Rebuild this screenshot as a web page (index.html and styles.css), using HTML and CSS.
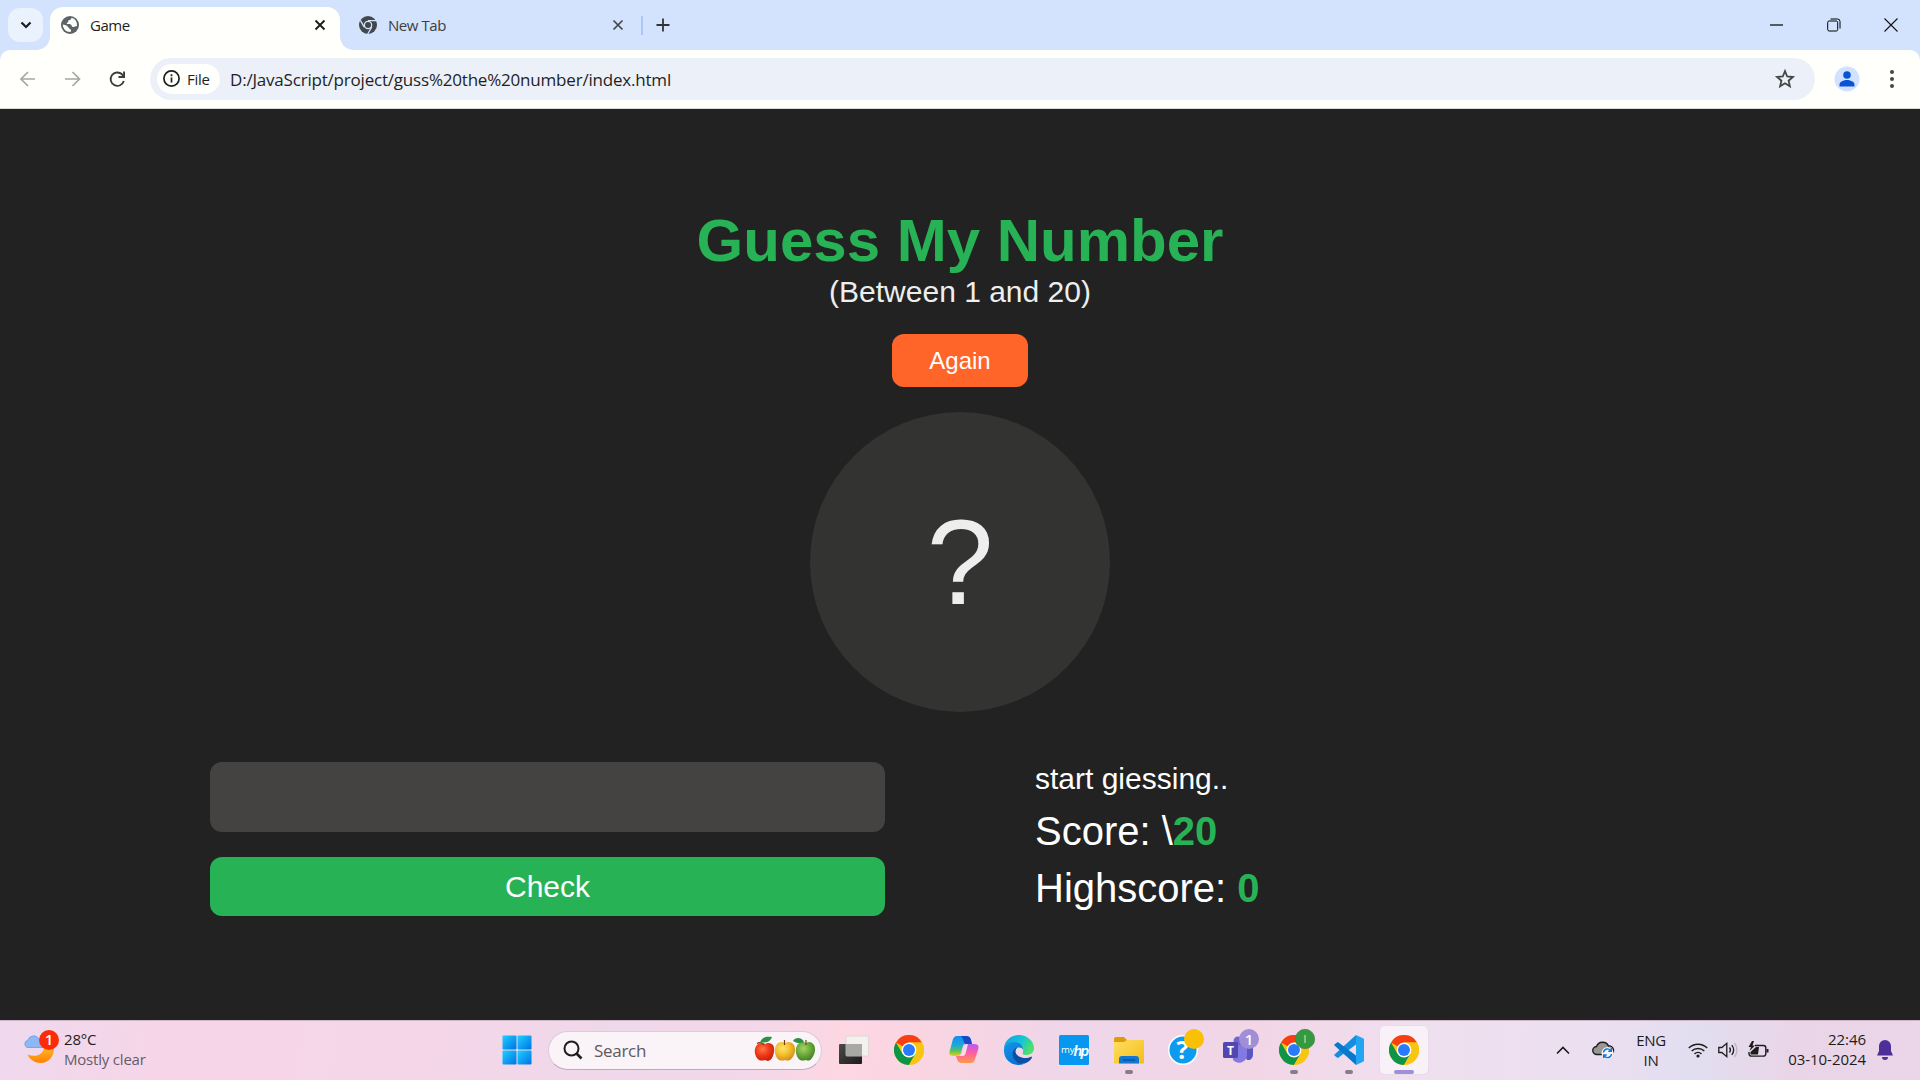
FILE: index.html
```html
<!DOCTYPE html>
<html lang="en">
<head>
<meta charset="utf-8">
<title>Game</title>
<link rel="stylesheet" href="styles.css">
</head>
<body>
<svg width="0" height="0" class="defs">
  <defs>
    <linearGradient id="win" x1="0" y1="0" x2="1" y2="1"><stop offset="0" stop-color="#1ed0ff"/><stop offset="1" stop-color="#0072e5"/></linearGradient>
    <linearGradient id="edgeA" x1="0" y1="0" x2="1" y2=".4"><stop offset="0" stop-color="#0aa0e0"/><stop offset=".6" stop-color="#14c4d8"/><stop offset="1" stop-color="#4be06a"/></linearGradient>
    <linearGradient id="edgeB" x1="0" y1="0" x2=".6" y2="1"><stop offset="0" stop-color="#1496e8"/><stop offset="1" stop-color="#0b6fd2"/></linearGradient>
    <linearGradient id="folder" x1="0" y1="0" x2="1" y2="1"><stop offset="0" stop-color="#ffdf63"/><stop offset="1" stop-color="#f5bc16"/></linearGradient>
    <linearGradient id="copA" x1="0" y1="0" x2="0" y2="1"><stop offset="0" stop-color="#128df0"/><stop offset=".45" stop-color="#1ba8dd"/><stop offset=".75" stop-color="#5cc25a"/><stop offset="1" stop-color="#f4cf12"/></linearGradient>
    <linearGradient id="copB" x1="0" y1="0" x2="0" y2="1"><stop offset="0" stop-color="#b45cf5"/><stop offset=".45" stop-color="#ff5aa5"/><stop offset="1" stop-color="#ff9a4a"/></linearGradient>
    <linearGradient id="moon" x1="0" y1="0" x2="0" y2="1"><stop offset="0" stop-color="#ffb52a"/><stop offset="1" stop-color="#ff8200"/></linearGradient>
    <radialGradient id="red" cx=".4" cy=".35" r=".7"><stop offset="0" stop-color="#ff7a4a"/><stop offset=".5" stop-color="#f23a17"/><stop offset="1" stop-color="#c31e0a"/></radialGradient>
    <radialGradient id="yel" cx=".4" cy=".35" r=".7"><stop offset="0" stop-color="#ffe36a"/><stop offset=".5" stop-color="#f3bf2e"/><stop offset="1" stop-color="#d08a1a"/></radialGradient>
    <radialGradient id="grn" cx=".4" cy=".35" r=".7"><stop offset="0" stop-color="#a6d463"/><stop offset=".5" stop-color="#6cac3c"/><stop offset="1" stop-color="#3f7d22"/></radialGradient>
    <linearGradient id="dark" x1="0" y1="0" x2="1" y2="1"><stop offset="0" stop-color="#4a4a48"/><stop offset="1" stop-color="#1b1b1b"/></linearGradient>
    <symbol id="chrome" viewBox="0 0 30 30">
      <circle cx="15" cy="15" r="15" fill="#f9c513"/>
      <path d="M15 15 2 7.500A15 15 0 0 1 28 7.500H15z" fill="#fa3e14"/>
      <path d="M2 7.500A15 15 0 0 0 15 30l6.500-11.200L8.500 18.800z" fill="#0d9447"/>
      <path d="M15 7.500h13A15 15 0 0 1 15 30l6.500-11.300z" fill="#f9c513"/>
      <circle cx="15" cy="15" r="7.400" fill="#fffffb"/>
      <circle cx="15" cy="15" r="6" fill="#2a7bfb"/>
    </symbol>
  </defs>
</svg>
<div class="screen">
  <header class="tabstrip">
    <div class="tabsearch"><svg width="12" height="12" viewBox="0 0 12 12"><path d="M1.500 3.500L6 8l4.500-4.500" fill="none" stroke="#1d1d1b" stroke-width="2.200"/></svg></div>
    <div class="tab active">
      <svg width="18" height="18" viewBox="0 0 18 18"><circle cx="9" cy="9" r="9" fill="#5e6368"/><path d="M10.500 1.800c-.2 1.500-1 2.200-2.700 2.400-.7.100-.3 1.800-1.200 2.200-1 .4-1.200 1.400-.3 1.600 1.800.2 4.300 0 4.400 1.900.1.900 1.300 1 2 1 .9 0 1.600-.9 3.300-.9a7.300 7.300 0 0 0-5.500-8.200zM1.800 8.500c1.400.5 4.500.6 5.100 2.400.3 1 1.600.6 1.600 1.900 0 .8 1.500.3 1.600 1.200.1.900-.5 1.500-.8 2.100A7.200 7.200 0 0 1 1.800 8.500z" fill="#fffffb"/></svg>
      <span class="tabname">Game</span>
      <svg width="12" height="12" viewBox="0 0 12 12"><path d="M1.500 1.500l9 9m0-9l-9 9" stroke="#1d1d1b" stroke-width="1.900"/></svg>
    </div>
    <div class="tab idle">
      <svg width="18" height="18" viewBox="0 0 18 18"><circle cx="9" cy="9" r="9" fill="#43474b"/><path d="M9 4.700h8M5.300 11.200L1.300 4.300M12.700 11.200L8.700 18" stroke="#d3e3fd" stroke-width="1.300"/><circle cx="9" cy="9" r="4.300" fill="#d3e3fd"/><circle cx="9" cy="9" r="3" fill="#43474b"/></svg>
      <span class="tabname">New Tab</span>
      <svg width="12" height="12" viewBox="0 0 12 12"><path d="M1.500 1.500l9 9m0-9l-9 9" stroke="#454746" stroke-width="1.700"/></svg>
    </div>
    <i class="divider"></i>
    <svg class="plus" width="14" height="14" viewBox="0 0 14 14"><path d="M7 .5v13M.5 7h13" stroke="#333" stroke-width="1.800"/></svg>
    <div class="winbtns">
      <svg width="14" height="14" viewBox="0 0 14 14"><path d="M1 7h13" stroke="#000" stroke-width="1.200"/></svg>
      <svg width="14" height="14" viewBox="0 0 14 14" fill="none" stroke="#000"><rect x=".7" y="3" width="10" height="10" rx="1.500"/><path d="M3.500 1h7a2.500 2.500 0 0 1 2.500 2.500v7"/></svg>
      <svg width="14" height="14" viewBox="0 0 14 14"><path d="M.5.500l13 13m0-13l-13 13" stroke="#111" stroke-width="1.100"/></svg>
    </div>
  </header>
  <div class="toolbar">
    <svg class="nav" width="18" height="18" viewBox="0 0 18 18" fill="none" stroke="#a7a7a5" stroke-width="1.700"><path d="M16 9H2.500M9 2L2 9l7 7"/></svg>
    <svg class="nav" width="18" height="18" viewBox="0 0 18 18" fill="none" stroke="#a7a7a5" stroke-width="1.700"><path d="M1 9h14M8.500 2l7 7-7 7"/></svg>
    <svg class="nav" width="18" height="18" viewBox="0 0 18 18"><path d="M15.800 11A6.700 6.700 0 1 1 14 4.300l1.500 1.700" fill="none" stroke="#3c3c3a" stroke-width="1.900"/><path d="M17 1.500V8h-6.500V6.100h4.600V1.500z" fill="#3c3c3a"/></svg>
    <div class="omnibox">
      <div class="chip"><svg width="17" height="17" viewBox="0 0 17 17"><circle cx="8.500" cy="8.500" r="7.600" fill="none" stroke="#1f1f1f" stroke-width="1.700"/><path d="M8.500 7.500v5M8.500 4.300v1.900" stroke="#1f1f1f" stroke-width="1.700"/></svg><span>File</span></div>
      <span class="url">D:/JavaScript/project/guss%20the%20number/index.html</span>
      <svg width="20" height="20" viewBox="0 0 20 20"><path d="M10 2.200l2.200 5.300 5.700.5-4.300 3.700 1.300 5.600-4.900-3-4.900 3 1.300-5.600L2.100 8l5.700-.5z" fill="none" stroke="#454746" stroke-width="1.800"/></svg>
    </div>
    <svg class="avatar" width="26" height="26" viewBox="0 0 26 26"><circle cx="13" cy="13" r="12.500" fill="#d0e2ff"/><circle cx="13" cy="9" r="3.800" fill="#0a53d6"/><path d="M5.500 20.500v-2c0-3 4.500-4.500 7.500-4.500s7.500 1.500 7.500 4.500v2z" fill="#0a53d6"/></svg>
    <svg class="dots" width="4" height="20" viewBox="0 0 4 20" fill="#454746"><circle cx="2" cy="3" r="2"/><circle cx="2" cy="10" r="2"/><circle cx="2" cy="17" r="2"/></svg>
  </div>

  <main class="game">
    <h1>Guess My Number</h1>
    <p class="between">(Between 1 and 20)</p>
    <button class="again">Again</button>
    <div class="number">?</div>
    <div class="columns">
      <section class="left">
        <input class="guess" type="text" aria-label="Guess">
        <button class="check">Check</button>
      </section>
      <section class="right">
        <p class="message">start giessing..</p>
        <p class="label">Score: \<b>20</b></p>
        <p class="label">Highscore: <b>0</b></p>
      </section>
    </div>
  </main>

  <footer class="taskbar">
    <div class="weather">
      <svg width="36" height="38" viewBox="0 0 36 38"><path d="M3 18.500a4 4 0 0 1 1-7.500 6 6 0 0 1 11-1l5 8.500z" fill="#8db8f6" stroke="#6c9de8" stroke-width=".8"/><path d="M3.500 25.500C12 29 20 25 20 18h9.500c1.500 9-5 16-12.500 16-6 0-11-3-13.500-8.500z" fill="url(#moon)"/><circle cx="25" cy="11" r="10" fill="#fc2b08"/><text x="25" y="16.300" class="badgetext">1</text></svg>
      <div class="lines"><span>28°C</span><span class="muted">Mostly clear</span></div>
    </div>
    <div class="dock">
      <svg class="start" width="30" height="30" viewBox="0 0 30 30" fill="url(#win)"><rect x=".5" y=".5" width="14" height="14" rx="1"/><rect x="15.500" y=".5" width="14" height="14" rx="1"/><rect x=".5" y="15.500" width="14" height="14" rx="1"/><rect x="15.500" y="15.500" width="14" height="14" rx="1"/></svg>
      <div class="search">
        <svg width="20" height="20" viewBox="0 0 20 20"><circle cx="8.500" cy="8.500" r="7" fill="none" stroke="#1e1e1e" stroke-width="2"/><path d="M13.500 13.500l5 5" stroke="#1e1e1e" stroke-width="2.600"/></svg>
        <span>Search</span>
        <svg class="apples" width="62" height="28" viewBox="0 0 62 28">
          <path d="M11 8c3-2 6-1 8 1 2 3 1 10-1 13-3 4-5 3-7 2-3 1-6 1-8-2-3-4-3-10 0-13 2-2 5-3 8-1z" fill="url(#red)"/><path d="M10 9C9 7 6 5.500 3 7.500" fill="none" stroke="#7a3a1a" stroke-width="1.200"/><path d="M6 6.500C8 1 12 .5 18 1c-2 5-6 6-12 5.500z" fill="#2f8f45"/>
          <path d="M31 7c3-2 7-1 9 2 2 4 1 10-2 13-2 3-5 3-7 2-3 1-6 1-8-2-3-5-3-10 0-14 2-2 5-3 8-1z" fill="url(#yel)"/><path d="M30.500 9V4" stroke="#7a3a1a" stroke-width="1.200"/>
          <path d="M52 7c3-2 6-1 8 2 2 4 1 9-2 13-2 3-4 3-6 2-3 1-6 1-8-2-3-5-3-10 0-14 2-2 5-3 8-1z" fill="url(#grn)"/><path d="M52 9V4" stroke="#5a4a1a" stroke-width="1.200"/><path d="M39 5c2-4 9-4 11 1-4 2-8 1-11-1z" fill="#2f8f45"/>
        </svg>
      </div>
      <div class="app"><svg width="30" height="30" viewBox="0 0 30 30"><rect y="9" width="23" height="20" rx="1" fill="url(#dark)"/><rect x="7" y="1" width="22.500" height="20" rx="1" fill="#f2f2ee" fill-opacity=".93" stroke="#d5d3d1" stroke-width=".8"/><path d="M7 9h16v12H7z" fill="#a8a8a6"/></svg></div>
      <div class="app"><svg width="30" height="30"><use href="#chrome"/></svg></div>
      <div class="app"><svg width="30" height="30" viewBox="0 0 30 30"><path d="M8 1h9c3 0 4 1 5 4l1 4h-6c-3 0-3 2-4 5l-1 4c-1 3-2 3-5 3H4c-4 0-4-3-3-6L4 4c1-2 2-3 4-3z" fill="url(#copA)"/><path d="M12 1h5c3 0 4 1 5 4l1 4h-5c-3 0-3-2-4-5z" fill="#1a49c6"/><path d="M22 28h-9c-3 0-4-1-5-4l-1-3c4 0 5-1 6-5l1-3c1-3 2-4 5-4h6c5 0 5 3 4 6l-3 9c-1 3-2 4-4 4z" fill="url(#copB)"/><path d="M7 21c4 0 5-1 6-5l1-3c1-3 2-4 5-4l-2 8c-1 3-1 4-4 4z" fill="#f7dcea"/></svg></div>
      <div class="app"><svg width="30" height="30" viewBox="0 0 30 30"><path d="M0 14C0 6 7 0 15 0s15 6 15 13c0 5-4 7-8 7-3 0-4-1-3-3 1-5-3-7-7-7C7 10 2 12 0 14z" fill="url(#edgeA)"/><path d="M0 14C2 8 8 6.500 13 7.500c5 1 6 5 6 8 0-3-7-5-8 1C10 22 14 28 20 29 8 33-1 24 0 14z" fill="url(#edgeB)"/><path d="M13 12.500c-5 2-6 8-2 12.500 3 4 8 5 12 2.500 2-1 4-3 5-5 .5-1-.5-1-1-.7-6 3-15 0-15.500-5 0-2 .5-3 1.500-4.300z" fill="#0b4fa5"/></svg></div>
      <div class="app"><svg width="30" height="30" viewBox="0 0 30 30"><rect width="30" height="30" rx="1.500" fill="#0797f0"/><text x="2" y="18" class="my">my</text><text x="14.500" y="20.500" class="hp">hp</text></svg></div>
      <div class="app dot"><svg width="30" height="30" viewBox="0 0 30 30"><path d="M0 4a2 2 0 0 1 2-2h8l3 3v5H0z" fill="#dd9d0a"/><path d="M0 7h10l3-2h17v22.500a1 1 0 0 1-1 1H0z" fill="url(#folder)"/><path d="M5 28.500V24a3 3 0 0 1 3-3h14a3 3 0 0 1 3 3v4.500z" fill="#0f78d4"/><path d="M9 25h12" stroke="#0a4d92" stroke-width="1.300"/></svg></div>
      <div class="app"><svg width="40" height="40" viewBox="0 0 40 40"><circle cx="19" cy="20" r="14.300" fill="#0c9bee" stroke="#fff" stroke-width="1.500"/><text x="18.500" y="28.500" class="q">?</text><circle cx="30" cy="9" r="10" fill="#f9c006"/></svg></div>
      <div class="app"><svg width="40" height="40" viewBox="0 0 40 40"><path d="M21 15h13v10a5 5 0 0 1-6 5z" fill="#5b55c0"/><path d="M13 13h15v12a8 8 0 0 1-14 5z" fill="#8379e2"/><circle cx="19" cy="11" r="4.500" fill="#6e68cd"/><rect x="4" y="12" width="15" height="16" rx="1.500" fill="#5048b0"/><text x="11.500" y="24.500" class="tee">T</text><circle cx="30" cy="9" r="10" fill="#a08ed6"/><text x="30" y="14.500" class="badgetext">1</text></svg></div>
      <div class="app dot"><svg width="40" height="40" viewBox="0 0 40 40"><use href="#chrome" x="5" y="5" width="30" height="30"/><circle cx="31" cy="9" r="9.700" fill="#349a3f" stroke="#54784c" stroke-width=".7"/><path d="M31 5v8" stroke="#91cc88" stroke-width="1.700"/></svg></div>
      <div class="app dot"><svg width="30" height="30" viewBox="0 0 30 30"><path d="M22 0L1 19c-1 1-1 1 0 2l2 1.500c.7.500 1 .5 1.600 0L24 8z" fill="#168ee0"/><path d="M22 30L1 11c-1-1-1-1 0-2l2-1.500c.7-.5 1-.5 1.600 0L24 22z" fill="#0879cc"/><path d="M22 0l7 3.200c.7.300 1 .8 1 1.500v20.600c0 .7-.3 1.200-1 1.500L22 30z" fill="#23a5f2"/></svg></div>
      <div class="app current"><svg width="30" height="30"><use href="#chrome"/></svg></div>
    </div>
    <div class="tray">
      <svg width="14" height="9" viewBox="0 0 14 9"><path d="M1 7.500l6-6 6 6" fill="none" stroke="#1c1c1c" stroke-width="1.600"/></svg>
      <svg class="cloud" width="22" height="20" viewBox="0 0 22 20"><path d="M5 14.500a4 4 0 0 1-.5-8A6.500 6.500 0 0 1 16.500 6a4.300 4.300 0 0 1 1.500 8.500z" fill="#999793" stroke="#1c1c1c" stroke-width="1.400"/><circle cx="15.500" cy="13" r="6" fill="#f6f3fb"/><path d="M11.500 12.500a4 4 0 0 1 7.500-1.500m.5 3a4 4 0 0 1-7.500 1.500M19.300 8v3.200h-3M11.700 18v-3h3" fill="none" stroke="#0b77d4" stroke-width="1.400"/></svg>
      <div class="lines lang"><span>ENG</span><span>IN</span></div>
      <svg class="wifi" width="20" height="16" viewBox="0 0 20 16" fill="none" stroke="#1c1c1c" stroke-width="1.400"><path d="M.8 6a13 13 0 0 1 18.400 0M3.700 9a9 9 0 0 1 12.600 0M6.500 11.900a5 5 0 0 1 7 0"/><circle cx="10" cy="14" r="1.600" fill="#1c1c1c" stroke="none"/></svg>
      <svg class="sound" width="20" height="16" viewBox="0 0 20 16" fill="none" stroke="#1c1c1c" stroke-width="1.300"><path d="M.8 5.500h3l5-4.200v13.400l-5-4.200h-3zM11.500 5.500q2 2.500 0 5M13.800 3.200q3.800 4.800 0 9.600"/><path d="M16.500 1q5 7 0 14" stroke="#bcb6c2"/></svg>
      <svg class="battery" width="21" height="18" viewBox="0 0 21 18"><path d="M7 4.500h8.500a2.300 2.300 0 0 1 2.300 2.300v6a2.300 2.300 0 0 1-2.300 2.300H3.300A2.300 2.300 0 0 1 1 12.800V11" fill="none" stroke="#1c1c1c" stroke-width="1.400"/><path d="M2.500 13.500V11L8 6h3l-1 7.500zM4 0L.5 6H3L1.500 10 7 4.500H4.500L6 0zM18.500 8h2v3.500h-2z" fill="#1c1c1c"/></svg>
      <div class="lines clock"><span>22:46</span><span>03-10-2024</span></div>
      <svg class="bell" width="16" height="20" viewBox="0 0 16 20" fill="#4d2f9a"><path d="M8 0a6 6 0 0 1 6 6v5l2 4.500H0L2 11V6a6 6 0 0 1 6-6zM5 17h6a3 3 0 0 1-6 0z"/></svg>
    </div>
  </footer>
</div>
</body>
</html>
```
FILE: styles.css
```css
* { box-sizing: border-box; margin: 0; padding: 0; }
body { width: 1920px; height: 1080px; overflow: hidden; background: #222; }
.defs { position: absolute; }
svg { display: block; flex: none; overflow: visible; }
.screen { display: flex; flex-direction: column; height: 1080px; font-family: "Open Sans", "Noto Sans", sans-serif; }

.tabstrip { display: flex; align-items: center; height: 50px; padding-left: 8px; background: #d3e3fd; }
.tabsearch { display: flex; align-items: center; justify-content: center; width: 35px; height: 34px; margin-right: 7px; border-radius: 12px; background: #eaf2fd; }
.tab { display: flex; align-items: center; font-size: 15px; letter-spacing: -.45px; }
.tab svg:first-child { margin-right: 11px; }
.tabname { flex: 1; }
.active { position: relative; width: 290px; height: 43px; margin-top: 7px; padding: 0 14px 7px 11px; border-radius: 13px 13px 0 0; background: #fffffb; color: #1f1f1f; }
.active::before, .active::after { content: ""; position: absolute; bottom: 0; width: 13px; height: 13px; }
.active::before { left: -13px; background: radial-gradient(circle at 0 0, transparent 12.500px, #fffffb 13px); }
.active::after { right: -13px; background: radial-gradient(circle at 100% 0, transparent 12.500px, #fffffb 13px); }
.idle { width: 301px; height: 36px; padding: 0 17px 0 19px; color: #3c4043; }
.divider { width: 2px; height: 19px; background: #a8c7fa; }
.plus { margin-left: 12.500px; }
.winbtns { display: flex; gap: 43.500px; margin-left: auto; margin-right: 22px; }

.toolbar { display: flex; align-items: center; height: 58px; padding: 0 26px 0 19px; background: linear-gradient(#fffffb, #fffffb); border-radius: 10px 10px 0 0; box-shadow: 0 1px #d8d8d4, 0 -10px #d3e3fd; clip-path: none; }
.screen { background: linear-gradient(#d3e3fd 80px, transparent 80px); }
.toolbar { box-shadow: 0 1px #d8d8d4; }
.nav { margin-right: 26.500px; }
.omnibox { display: flex; align-items: center; width: 1665px; height: 42px; margin-left: -2.500px; padding: 0 20px 0 7px; border-radius: 21px; background: #ebf0f9; }
.chip { display: flex; align-items: center; gap: 7px; width: 63px; height: 30px; padding-left: 6px; padding-bottom: 1px; border-radius: 15px; background: #fffffb; font-size: 15px; font-weight: 500; color: #1f1f1f; letter-spacing: -.3px; }
.url { flex: 1; margin-left: 10px; font-size: 17px; letter-spacing: -.2px; color: #1f1f1f; white-space: nowrap; }
.avatar { margin-left: 19px; }
.dots { margin-left: auto; }

.game { flex: 1; display: flex; flex-direction: column; align-items: center; margin-top: 1px; padding-top: 97px; background: #222; color: #fff; font-family: "Liberation Sans", Arial, sans-serif; }
.game button, .game input { border: 0; outline: 0; font-family: inherit; color: #fff; }
h1 { font-size: 60px; line-height: 69px; color: #28b256; white-space: nowrap; }
.between { font-size: 30px; line-height: 34px; color: #eee; }
.again { width: 136px; height: 53px; margin-top: 25px; border-radius: 12px; background: #ff6528; font-size: 24px; }
.number { display: grid; place-items: center; width: 300px; height: 300px; margin-top: 25px; border-radius: 50%; background: #333331; font-size: 120px; color: #eee; }
.columns { display: flex; justify-content: space-between; width: 1500px; margin-top: 50px; }
.left { display: flex; flex-direction: column; gap: 25px; width: 675px; }
.guess { height: 70px; border-radius: 12px; background: #444341; }
.check { height: 59px; border-radius: 12px; background: #28b256; font-size: 30px; }
.right { width: 675px; }
.message { font-size: 30px; line-height: 34px; }
.label { margin-top: 12px; font-size: 40px; line-height: 45px; }
.message + .label { margin-top: 13px; }
.label b { color: #28b256; }

.taskbar { display: flex; align-items: center; height: 60px; border-top: 1px solid #cdb6c6; color: #1c1c1c; background: linear-gradient(97deg, #efd9ee 0, #f7d5e8 170px, #f5d6e8 400px, #efd8eb 620px, #f3d7ea 750px, #fdd7e2 840px, #f8d5e2 950px, #efd6ea 1060px, #f2d6e6 1250px, #efdfef 1400px, #ecdff1 1580px, #e1def0 1690px, #ead5e8 1780px, #ead6e8 1920px); }
.lines { display: flex; flex-direction: column; padding-bottom: 4px; font-size: 15px; line-height: 20px; letter-spacing: -.2px; white-space: nowrap; }
.weather { display: flex; align-items: center; gap: 4px; width: 502px; padding-left: 24px; }
.weather svg { margin-top: -6px; }
.muted { color: #665c66; }
.badgetext { font: 600 15px "Open Sans", sans-serif; fill: #fff; text-anchor: middle; }
.dock { display: flex; align-items: center; gap: 7px; padding-bottom: 1px; }
.search { display: flex; align-items: center; width: 274px; height: 39px; margin-left: 9px; margin-right: 1px; padding: 0 5px 0 14px; border: 1px solid #dfc9da; border-bottom-color: #bfa9bb; border-radius: 20px; background: #faf3f7; font-size: 17px; letter-spacing: -.3px; color: #5e5a5e; }
.search span { flex: 1; margin-left: 11px; }
.app { position: relative; display: grid; place-items: center; width: 48px; height: 48px; }
.dot::after, .current::after { content: ""; position: absolute; left: 20px; bottom: 0; width: 8px; height: 4px; border-radius: 2px; background: #877d86; }
.current { border-radius: 5px; background: #f8f1f8; box-shadow: 0 0 0 1px #e8dce8; }
.current::after { left: 14px; width: 20px; background: #a08ed6; }
.my { font: 9.500px "Open Sans", sans-serif; fill: #fff; }
.hp { font: italic 700 14px "Liberation Sans Narrow", "Liberation Sans", sans-serif; fill: #fff; letter-spacing: -1.500px; }
.q { font: 700 25px "Open Sans", sans-serif; fill: #fff; text-anchor: middle; }
.tee { font: 700 12px "Open Sans", sans-serif; fill: #fff; text-anchor: middle; }
.tray { display: flex; align-items: center; margin-left: auto; margin-right: 27px; padding-bottom: 1px; }
.cloud { margin-left: 22px; }
.lang { width: 32px; margin-left: 21px; padding-bottom: 1px; align-items: center; letter-spacing: -.3px; }
.wifi { margin-left: 21px; }
.sound { margin-left: 10px; }
.battery { margin-left: 10px; }
.clock { width: 80px; margin-left: 17px; padding-bottom: 3px; align-items: flex-end; letter-spacing: -.05px; }
.bell { margin-left: 11px; }
```
